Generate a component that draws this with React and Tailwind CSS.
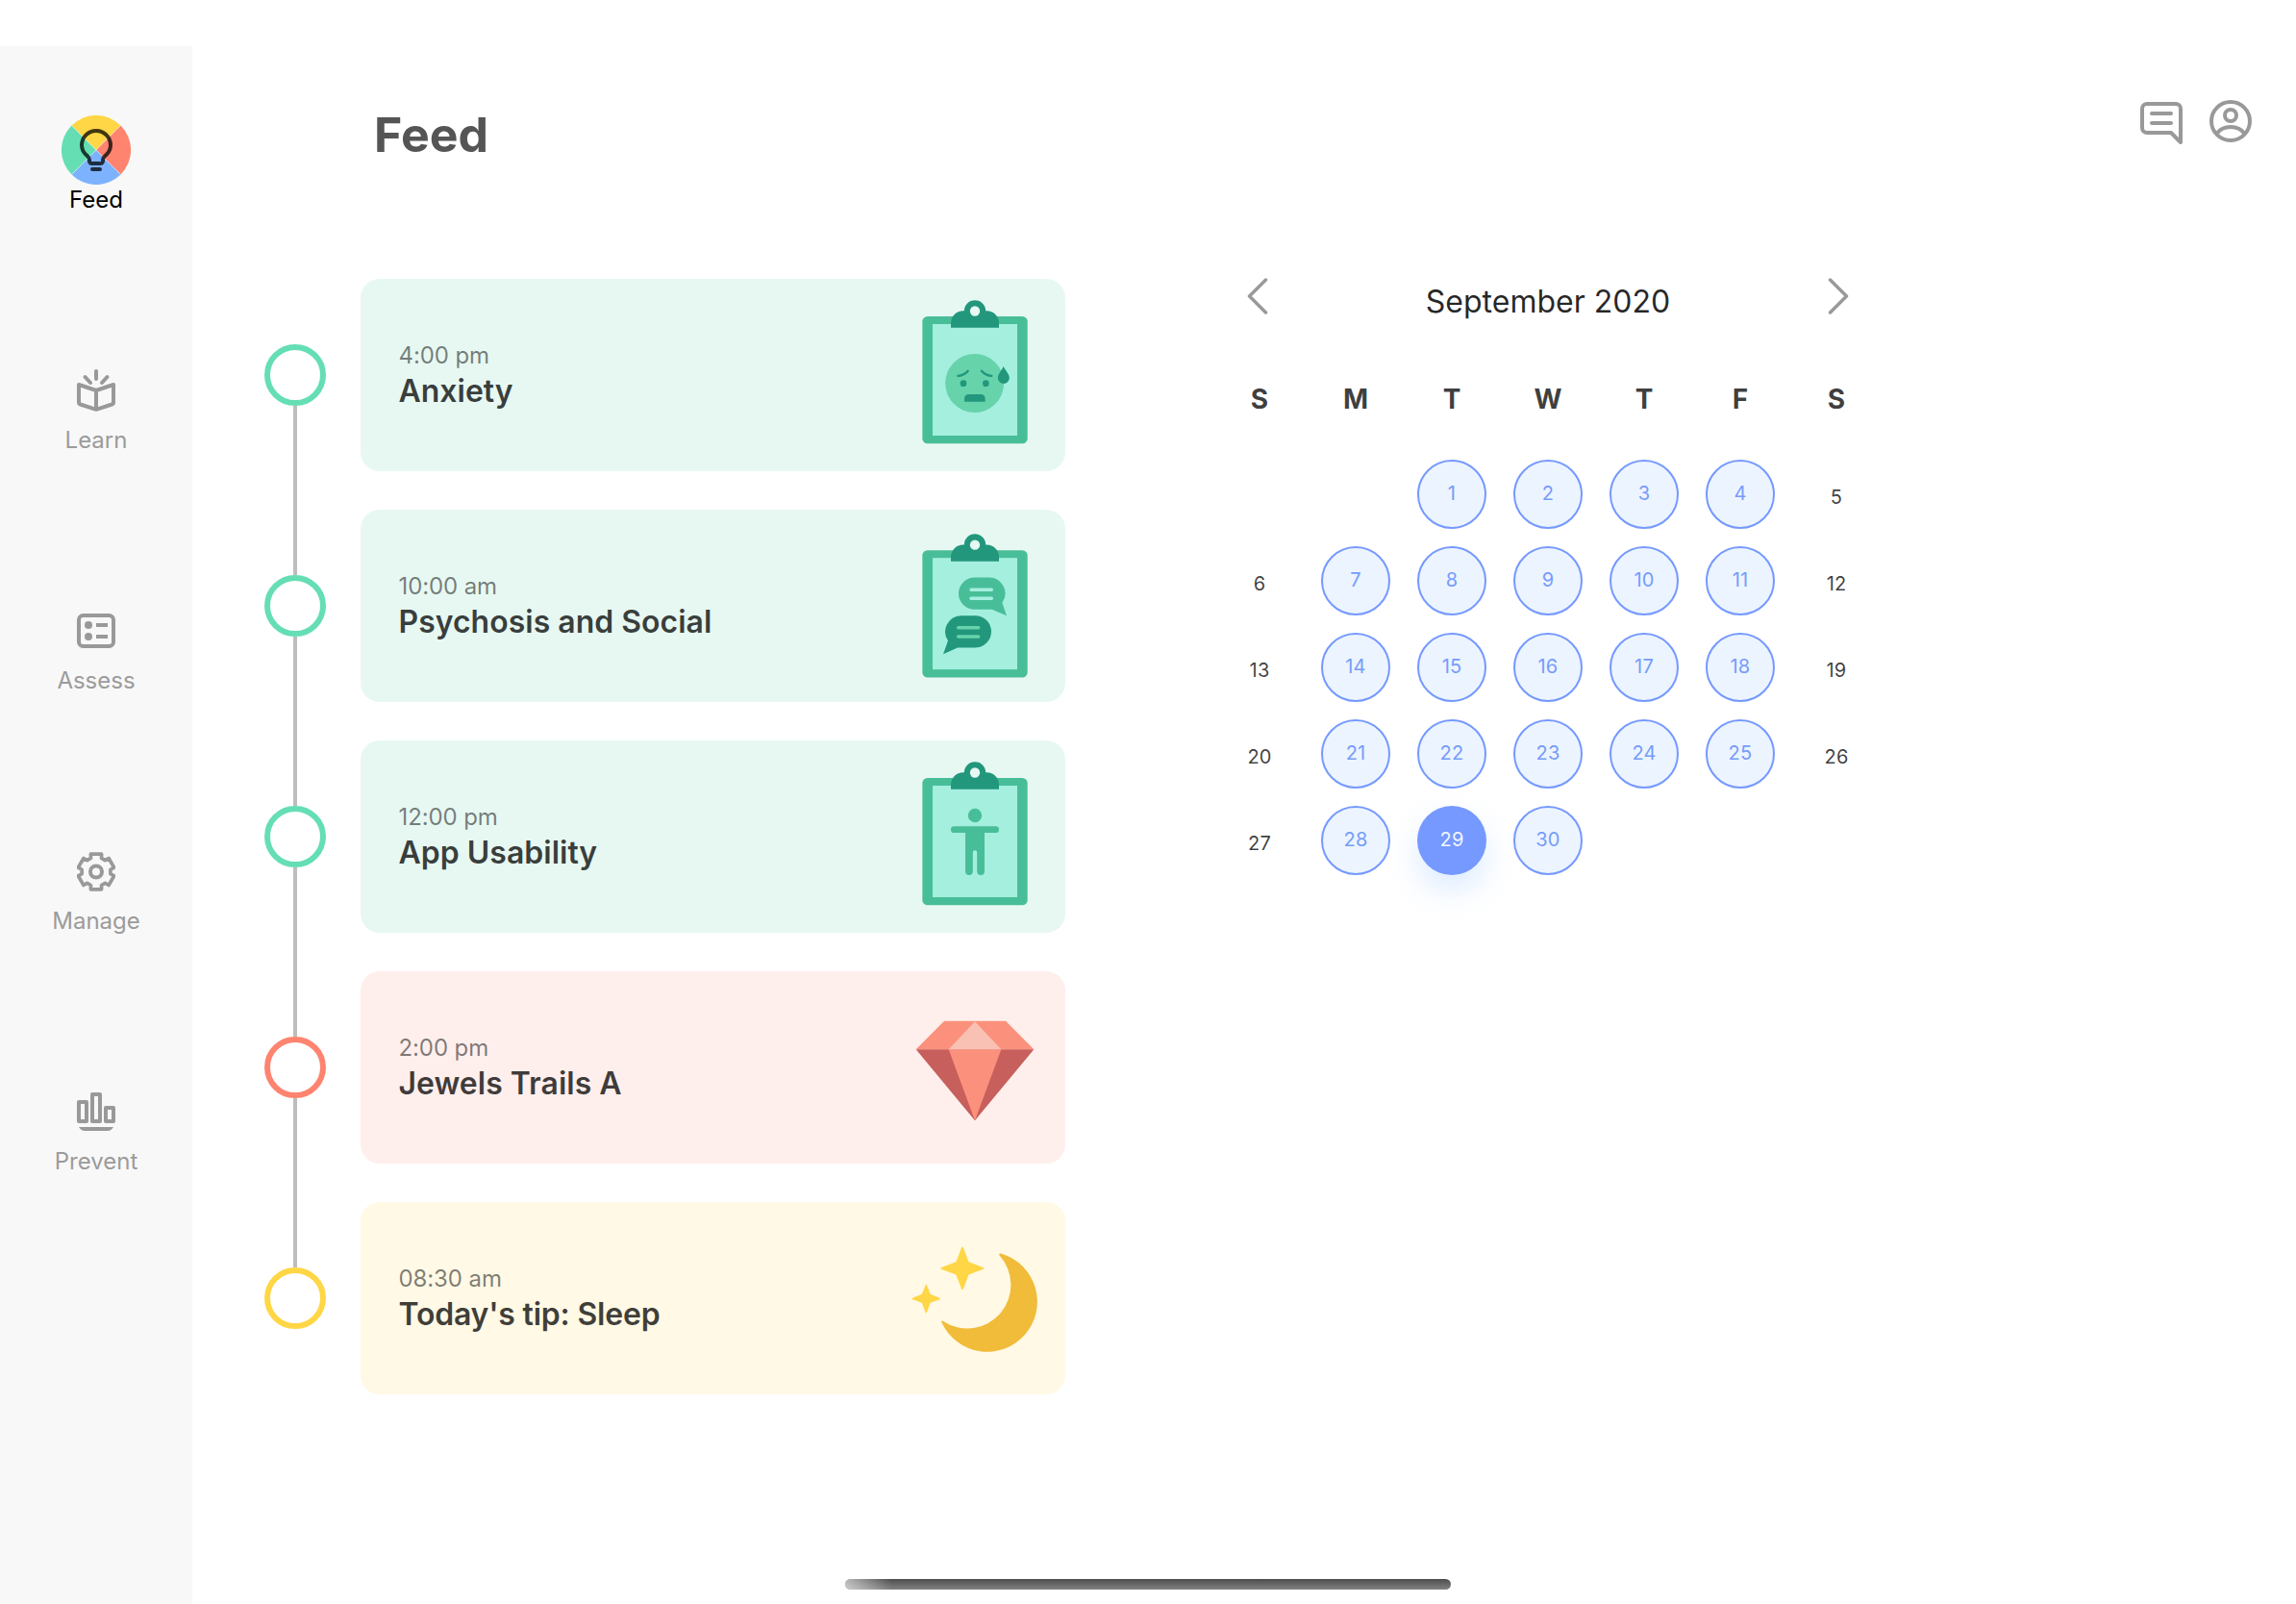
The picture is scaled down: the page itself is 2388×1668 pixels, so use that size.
const GEAR_POINTS = Array.from({ length: 6 }, (_, i) => {
  const a = (i * Math.PI) / 3 - Math.PI / 2;
  const at = (angle, r, t) => {
    const x = 20 + r * Math.cos(angle) - t * Math.sin(angle);
    const y = 20.5 + r * Math.sin(angle) + t * Math.cos(angle);
    return `${x.toFixed(2)},${y.toFixed(2)}`;
  };
  const valley = a + Math.PI / 6;
  return [at(a, 18.3, -5.6), at(a, 18.3, 5.6), at(valley, 14.9, -2.2), at(valley, 14.9, 2.2)].join(' ');
}).join(' ');

function FeedIcon() {
  return (
    <svg className="size-[72px]" viewBox="0 0 72 72" fill="none">
      <path d="M36 36 10.5 10.5a36 36 0 0 1 51 0Z" fill="#FFD645" />
      <path d="M36 36 61.5 10.5a36 36 0 0 1 0 51Z" fill="#FE8470" />
      <path d="M36 36 61.5 61.5a36 36 0 0 1-51 0Z" fill="#7DB2FF" />
      <path d="M36 36 10.5 61.5a36 36 0 0 1 0-51Z" fill="#65DEB4" />
      <path d="M10.500 10.500l51 51M61.500 10.500l-51 51" stroke="#fff" strokeOpacity="0.7" strokeWidth="0.6" />
      <g stroke="#000" strokeOpacity="0.75" strokeWidth="4" strokeLinecap="round" strokeLinejoin="round">
        <path d="M29 47.500V46c0-2-1.200-3-3-4.600C22.800 38.600 21 35.200 21 31a15 15 0 0 1 30 0c0 4.200-1.800 7.600-5 10.400C44.200 43 43 44 43 46v1.500a2.500 2.500 0 0 1-2.500 2.500h-9a2.500 2.500 0 0 1-2.500-2.500Z" />
        <path d="M32 56h8" />
      </g>
    </svg>
  );
}

function LearnIcon() {
  return (
    <svg className="h-11 w-10" viewBox="0 0 40 44" fill="none" stroke="#999" strokeWidth="4" strokeLinecap="round" strokeLinejoin="round">
      <path d="M2 16 20 22 38 16V34.500Q38 36 36.500 36.500L20 41.800 3.500 36.500Q2 36 2 34.500ZM20 22V41.500" />
      <path d="M20 2v8M8.500 8l5.500 6M31.500 8l-5.500 6" />
    </svg>
  );
}

function AssessIcon() {
  return (
    <svg className="h-9 w-10" viewBox="0 0 40 36" fill="none" stroke="#999" strokeWidth="4">
      <rect x="2" y="2" width="36" height="32" rx="4.500" />
      <path d="M20 12h12M20 24h12" />
      <circle cx="12" cy="12" r="4" fill="#999" stroke="none" />
      <circle cx="12" cy="24" r="4" fill="#999" stroke="none" />
    </svg>
  );
}

function ManageIcon() {
  return (
    <svg className="h-[41px] w-10" viewBox="0 0 40 41" fill="none" stroke="#999" strokeWidth="3.700" strokeLinejoin="round">
      <polygon points={GEAR_POINTS} />
      <circle cx="20" cy="20.500" r="6" strokeWidth="4" />
    </svg>
  );
}

function PreventIcon() {
  return (
    <svg className="size-10" viewBox="0 0 40 40" fill="none" stroke="#999" strokeWidth="4" strokeLinejoin="round">
      <rect x="2" y="10" width="8" height="20" />
      <rect x="16" y="2" width="8" height="28" />
      <rect x="30" y="16" width="8" height="14" />
      <path d="M2 36h36q-2.500 4-6 4H8q-3.500 0-6-4Z" fill="#999" stroke="none" />
    </svg>
  );
}

const NAV = [
  { label: 'Feed', Icon: FeedIcon, color: 'text-black' },
  { label: 'Learn', Icon: LearnIcon, color: 'text-[#9b9b9b]' },
  { label: 'Assess', Icon: AssessIcon, color: 'text-[#9b9b9b]' },
  { label: 'Manage', Icon: ManageIcon, color: 'text-[#9b9b9b]' },
  { label: 'Prevent', Icon: PreventIcon, color: 'text-[#9b9b9b]' },
];

function Sidebar() {
  return (
    <nav className="mt-12 flex w-[200px] shrink-0 flex-col bg-[#f8f8f8] pt-[72px]">
      {NAV.map(({ label, Icon, color }) => (
        <a key={label} className="flex h-[250px] flex-col items-center">
          <span className="flex size-[72px] items-center justify-center">
            <Icon />
          </span>
          <span className={`text-2xl/[31px] ${color}`}>{label}</span>
        </a>
      ))}
    </nav>
  );
}

function Clipboard({ children }) {
  return (
    <g>
      <rect x="178" y="117" width="328" height="397" rx="16" fill="#48BE98" />
      <rect x="210" y="141" width="264" height="348" fill="#A5EFDF" />
      <path d="M267 152v-14a38 38 0 0 1 38-38h3.500a33.500 33.500 0 0 1 67 0H379a38 38 0 0 1 38 38v14Z" fill="#22977C" />
      <circle cx="342" cy="100.500" r="15.500" fill="#E7F8F2" />
      {children}
    </g>
  );
}

function AnxietyArt() {
  return (
    <Clipboard>
      <circle cx="341" cy="325.500" r="91.500" fill="#67D3AB" />
      <g fill="#22977C">
        <circle cx="306" cy="326" r="10" />
        <circle cx="376" cy="326" r="10" />
        <path d="M309 383v-9a14 14 0 0 1 14-14h37a14 14 0 0 1 14 14v9Z" />
        <path d="M431 273c7 14 18.500 24 18.500 36a18 18 0 0 1-36 0c0-12 11-22 17.500-36Z" />
      </g>
      <path d="M289 302.500q18-1 31-15M363 287.500q13 14 31 15" fill="none" stroke="#22977C" strokeWidth="7" strokeLinecap="round" />
    </Clipboard>
  );
}

function SocialArt() {
  return (
    <g transform="translate(0 9.500)">
      <Clipboard>
        <path d="M341 202h44a50 50 0 0 1 42 79l14 40-46-19h-54a50 50 0 0 1 0-100Z" fill="#48BE98" />
        <path d="M298 321h45a50 50 0 0 1 0 100h-55l-45 20 15-42a50 50 0 0 1 40-78Z" fill="#22977C" />
        <g strokeWidth="10.500" strokeLinecap="round">
          <path d="M330 240h64M330 267.500h64" stroke="#A5EFDF" />
          <path d="M290 359h63M290 386.500h63" stroke="#67D3AB" />
        </g>
      </Clipboard>
    </g>
  );
}

function UsabilityArt() {
  return (
    <Clipboard>
      <circle cx="342" cy="234" r="21.500" fill="#48BE98" />
      <path
        d="M277 268h130a10 10 0 0 1 0 20h-35v120a11.700 11.700 0 0 1-23.500 0v-59a6.500 6.500 0 0 0-13 0v59a11.700 11.700 0 0 1-23.500 0V288h-35a10 10 0 0 1 0-20Z"
        fill="#48BE98"
      />
    </Clipboard>
  );
}

function JewelArt() {
  return (
    <g>
      <path d="M246 155.500h192l88 88.500H158Z" fill="#FB917C" />
      <path d="M158 244h368L342 465.500Z" fill="#C75F5C" />
      <path d="M260 244h164l-82 221.500Z" fill="#FB917C" />
      <path d="M342 157l82 87H260Z" fill="#F9C1B4" />
    </g>
  );
}

function SleepArt() {
  return (
    <g>
      <path d="M425 161.500a156 156 0 1 1-186.500 214c-2-4 0-6.500 3.500-4.500a136 136 0 0 0 176-205c-2.500-3.500 2-6.500 7-4.500Z" fill="#F0BC39" />
      <g fill="#FFD645">
        <path d="M301 140.500h4l17.500 46 46.500 18.500v4l-46.500 17.500-17.500 46.500h-4l-18-46.500-47-17.500v-4l47-18.500Z" />
        <path d="M188.500 258h3l11.500 29 31 13v3l-31 11.500-11.500 31h-3l-12-31-31-11.500v-3l31-13Z" />
      </g>
    </g>
  );
}

const EVENTS = [
  { time: '4:00 pm', title: 'Anxiety', Art: AnxietyArt, card: 'bg-[#e7f8f2]', ring: 'border-[#65deb4]' },
  { time: '10:00 am', title: 'Psychosis and Social', Art: SocialArt, card: 'bg-[#e7f8f2]', ring: 'border-[#65deb4]' },
  { time: '12:00 pm', title: 'App Usability', Art: UsabilityArt, card: 'bg-[#e7f8f2]', ring: 'border-[#65deb4]' },
  { time: '2:00 pm', title: 'Jewels Trails A', Art: JewelArt, card: 'bg-[#ffefec]', ring: 'border-[#fe8470]' },
  { time: '08:30 am', title: "Today's tip: Sleep", Art: SleepArt, card: 'bg-[#fff9e5]', ring: 'border-[#ffd645]', tracking: 'tracking-[-0.2px]' },
];

function Timeline() {
  return (
    <section className="flex w-[833px] flex-col gap-10">
      {EVENTS.map(({ time, title, Art, card, ring, tracking = '' }, i) => (
        <article key={title} className="flex h-[200px]">
          <div className="relative flex w-16 items-center">
            {i < EVENTS.length - 1 && <span className="absolute left-[30px] top-[132px] h-44 w-1 bg-[#bdbdbd]" />}
            <span className={`size-16 rounded-full border-6 ${ring}`} />
          </div>
          <div className={`ml-9 flex w-[733px] justify-between rounded-[20px] pl-[39.5px] pr-7 ${card}`}>
            <div className="pt-[63px]">
              <p className="text-2xl/[34px] tracking-[-0.1px] text-black/50">{time}</p>
              <h2 className={`text-[32px]/10 font-semibold text-black/75 ${tracking}`}>{title}</h2>
            </div>
            <svg className="h-[200px] w-[132px]" viewBox="144 0 396 600">
              <Art />
            </svg>
          </div>
        </article>
      ))}
    </section>
  );
}

function Day({ index }) {
  const day = index - 1;
  if (day < 1 || day > 30) return <span />;
  const weekend = index % 7 === 0 || index % 7 === 6;
  if (weekend) {
    return <span className="flex size-[72px] items-center justify-center pt-1.5 text-xl tracking-[0.2px] text-black/75">{day}</span>;
  }
  if (day === 29) {
    return (
      <span className="flex size-[72px] items-center justify-center rounded-full bg-[#7599ff] pb-0.5 text-xl tracking-[0.2px] text-white/90 shadow-[0_16px_30px_rgba(125,178,255,0.25)]">
        {day}
      </span>
    );
  }
  return (
    <span className="flex size-[72px] items-center justify-center rounded-full border-2 border-[#7599ff] bg-[#ecf4ff] pb-0.5 text-xl tracking-[0.2px] text-[#769cfa]">
      {day}
    </span>
  );
}

function Chevron({ d }) {
  return (
    <svg className="mt-[3px] h-[38px] w-[22px]" viewBox="0 0 22 38" fill="none" stroke="#999" strokeWidth="3.500" strokeLinecap="round" strokeLinejoin="round">
      <path d={d} />
    </svg>
  );
}

function Calendar() {
  return (
    <section className="-mt-1 w-[700px]">
      <header className="flex h-[109px] justify-between px-[37px]">
        <Chevron d="M19.500 2 2.500 19l17 17" />
        <h3 className="pt-2 text-[32px]/10 text-black/85">September 2020</h3>
        <Chevron d="M2.500 2l17 17-17 17" />
      </header>
      <div className="grid h-[83px] grid-cols-7 justify-items-center text-[28px]/10 font-bold text-black/75">
        {['S', 'M', 'T', 'W', 'T', 'F', 'S'].map((d, i) => (
          <span key={i}>{d}</span>
        ))}
      </div>
      <div className="grid auto-rows-[72px] grid-cols-7 justify-items-center gap-y-[18px]">
        {Array.from({ length: 35 }, (_, i) => (
          <Day key={i} index={i} />
        ))}
      </div>
    </section>
  );
}

export default function App() {
  return (
    <div className="relative flex h-[1668px] w-[2388px] overflow-hidden bg-white font-['Inter',sans-serif]">
      <Sidebar />
      <main className="flex-1">
        <header className="flex h-[290px] justify-between pl-[189px] pr-[46px]">
          <h1 className="pt-[110px] text-[50px]/[60px] font-bold text-[#555]">Feed</h1>
          <div className="flex gap-7 pt-[104px]">
            <svg className="mt-0.5 size-11" viewBox="0 0 44 44" fill="none" stroke="#999" strokeWidth="4" strokeLinecap="round" strokeLinejoin="round">
              <path d="M42 42V7a5 5 0 0 0-5-5H7a5 5 0 0 0-5 5v20a5 5 0 0 0 5 5h25ZM12 12h20M12 22h20" />
            </svg>
            <svg className="size-11" viewBox="0 0 44 44" fill="none" stroke="#999" strokeWidth="4">
              <circle cx="22" cy="22" r="20" />
              <circle cx="22" cy="16" r="6" />
              <path d="M7.500 35C14 25.700 30 25.700 36.500 35" />
            </svg>
          </div>
        </header>
        <div className="flex gap-[152px] pl-[75px]">
          <Timeline />
          <Calendar />
        </div>
      </main>
      <div className="absolute bottom-[15px] left-[879px] h-[11px] w-[630px] overflow-hidden rounded-full bg-linear-to-b from-[#4d4d4d] to-[#828282]">
        <div className="h-full w-12 bg-linear-to-r from-white/60 to-transparent" />
      </div>
    </div>
  );
}
